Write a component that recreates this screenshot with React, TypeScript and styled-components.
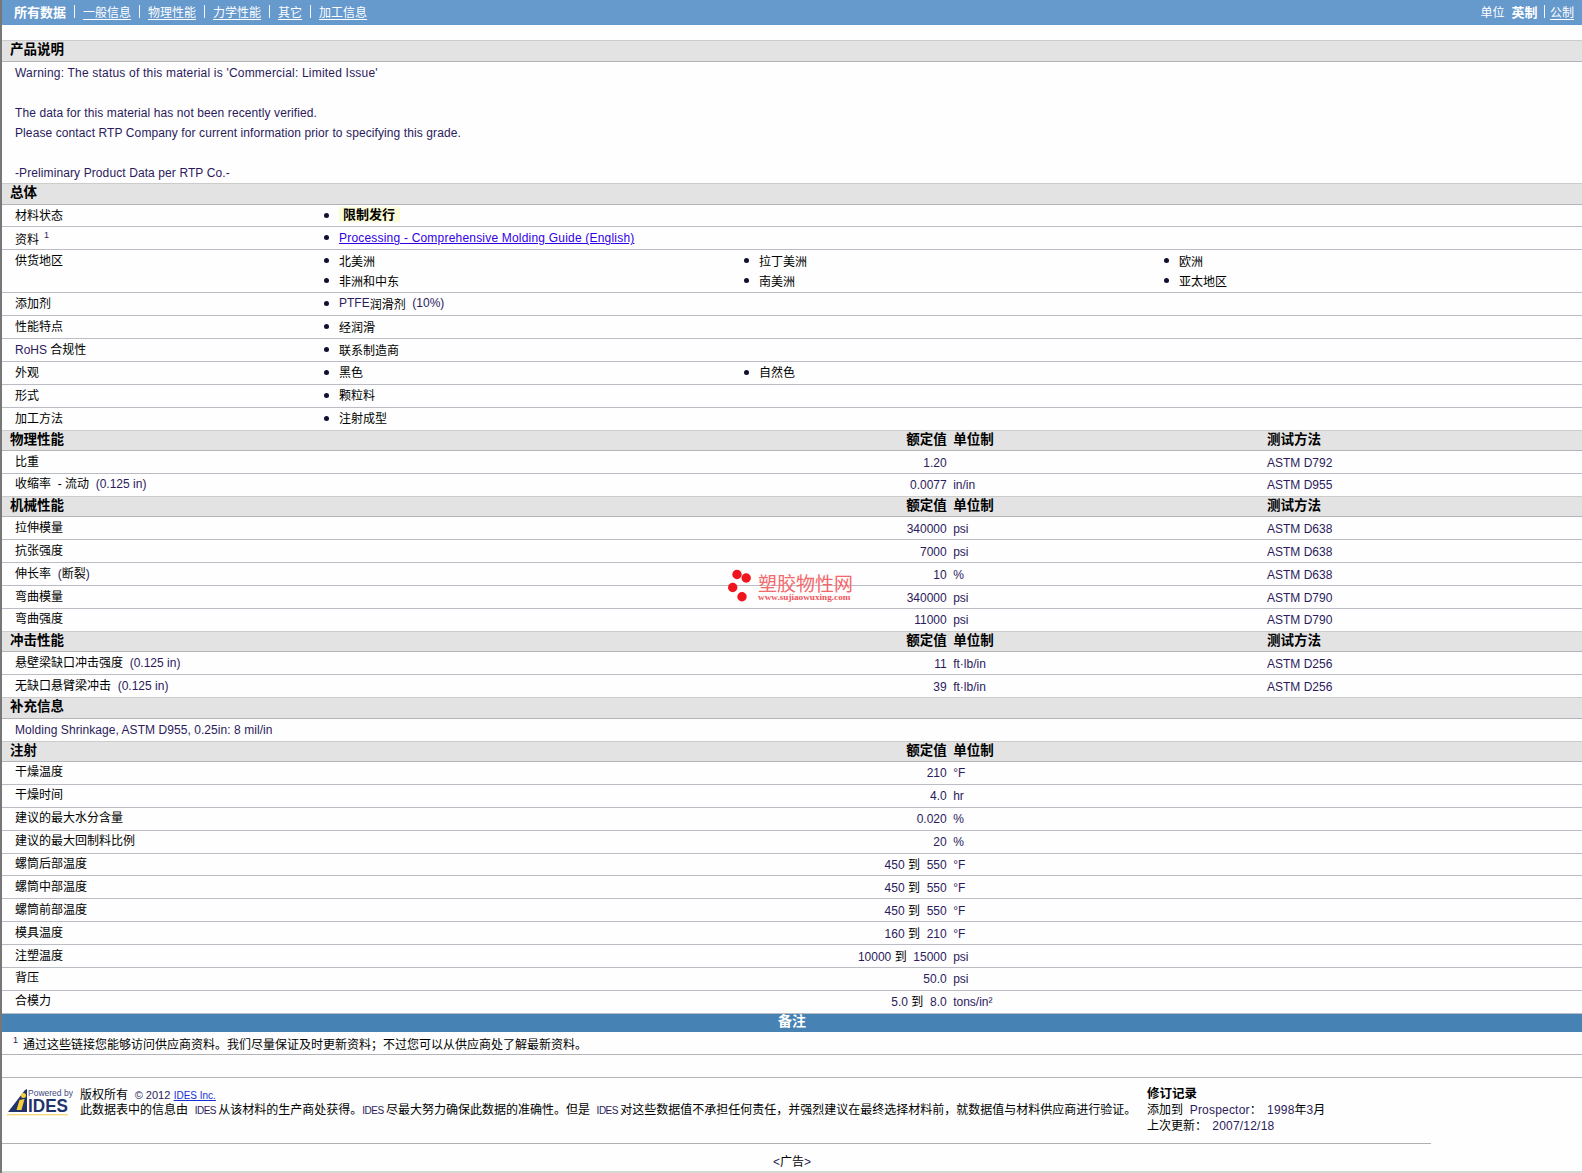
import React from 'react';
import styled, { createGlobalStyle } from 'styled-components';

const GlobalStyle = createGlobalStyle`
  html, body {
    margin: 0;
    padding: 0;
    background: #fdfefd;
  }
  body {
    font-family: "Liberation Sans", "Noto Sans CJK SC", sans-serif;
    font-size: 12px;
    color: #000;
  }
`;

const ROW = '22.9px';
const LINE = '#bcbcc4';
const LATIN = '#2c1a5c';

const App = () => (
  <Page>
    <GlobalStyle />
    <TopBar>
      <Nav>
        <NavCurrent>所有数据</NavCurrent>
        {['一般信息', '物理性能', '力学性能', '其它', '加工信息'].map((t) => (
          <React.Fragment key={t}>
            <NavSep />
            <NavLink>{t}</NavLink>
          </React.Fragment>
        ))}
      </Nav>
      <Units>
        <span>单位</span>
        <NavCurrent>英制</NavCurrent>
        <UnitSep />
        <NavLink>公制</NavLink>
      </Units>
    </TopBar>

    <Section>
      <SectionTitle>产品说明</SectionTitle>
    </Section>
    <Description>
      <p>Warning: The status of this material is 'Commercial: Limited Issue'</p>
      <p>&nbsp;</p>
      <p>The data for this material has not been recently verified.</p>
      <p>Please contact RTP Company for current information prior to specifying this grade.</p>
      <p>&nbsp;</p>
      <p>-Preliminary Product Data per RTP Co.-</p>
    </Description>

    <Section>
      <SectionTitle>总体</SectionTitle>
    </Section>
    {general.map((g, i) => (
      <ListRow key={i} $tall={g.items.length > 3}>
        <ListLabel>{g.label}</ListLabel>
        <ItemGrid>
          {g.items.map((item, j) => (
            <Item key={j}>{item}</Item>
          ))}
        </ItemGrid>
      </ListRow>
    ))}

    {properties.map((s) => (
      <PropSection key={s.title} title={s.title} method={s.method} rows={s.rows} />
    ))}

    <Section>
      <SectionTitle>补充信息</SectionTitle>
    </Section>
    <TextRow>Molding Shrinkage, ASTM D955, 0.25in: 8 mil/in</TextRow>

    <PropSection title="注射" rows={injection} />

    <NotesBar>备注</NotesBar>
    <Footnote>
      <Sup>1</Sup>
      <span>通过这些链接您能够访问供应商资料。我们尽量保证及时更新资料；不过您可以从供应商处了解最新资料。</span>
    </Footnote>
    <EmptyRow />

    <Footer>
      <IdesLogo />
      <Legal>
        <div>
          版权所有&nbsp; <Small>© 2012</Small> <LegalLink>IDES Inc.</LegalLink>
        </div>
        <div>
          此数据表中的信息由&nbsp; <Brand>IDES </Brand>从该材料的生产商处获得。<Brand>IDES </Brand>尽最大努力确保此数据的准确性。但是&nbsp; <Brand>IDES </Brand>对这些数据值不承担任何责任，并强烈建议在最终选择材料前，就数据值与材料供应商进行验证。
        </div>
      </Legal>
      <Revision>
        <RevisionTitle>修订记录</RevisionTitle>
        <div>
          添加到&nbsp; <Wide>Prospector</Wide>：&nbsp;<RevisionDate>1998</RevisionDate>年<En>3</En>月
        </div>
        <div>
          上次更新：&nbsp;<RevisionDate>2007/12/18</RevisionDate>
        </div>
      </Revision>
    </Footer>

    <AdRow>
      <En>&lt;</En>广告<En>&gt;</En>
    </AdRow>
    <BottomEdge />

    <Watermark>
      <svg width="30" height="36" viewBox="0 0 30 36">
        <circle cx="9" cy="5.5" r="4.7" fill="#f0141e" />
        <circle cx="18.2" cy="9" r="4.7" fill="#f0141e" />
        <circle cx="4.7" cy="18.5" r="4.7" fill="#f0141e" />
        <circle cx="14" cy="27.8" r="4.7" fill="#f0141e" />
      </svg>
      <WatermarkText>
        <WatermarkName>塑胶物性网</WatermarkName>
        <WatermarkUrl>www.sujiaowuxing.com</WatermarkUrl>
      </WatermarkText>
    </Watermark>
  </Page>
);

const PropSection = ({ title, method, rows }: { title: string; method?: boolean; rows: Prop[] }) => (
  <>
    <PropHead>
      <SectionTitle>{title}</SectionTitle>
      <HeadValue>额定值</HeadValue>
      <HeadUnit>单位制</HeadUnit>
      {method && <HeadUnit $method>测试方法</HeadUnit>}
    </PropHead>
    {rows.map((r, i) => (
      <PropRow key={i}>
        <PropName>{r[0]}</PropName>
        <PropValue>{r[1]}</PropValue>
        <PropUnit>{r[2]}</PropUnit>
        <PropUnit $method>{r[3]}</PropUnit>
      </PropRow>
    ))}
  </>
);

const IdesLogo = () => (
  <svg width="66" height="28" viewBox="0 0 66 28">
    <path d="M1 24 L18 2 L20 1 L20 24 Z" fill="#22336b" />
    <path d="M12.5 12 L17.5 11 L14.5 22 L9.5 22 Z" fill="#f4cf3a" />
    <circle cx="16.5" cy="7.5" r="2.5" fill="#f4cf3a" />
    <text x="21" y="8" fontFamily="Liberation Sans" fontSize="8.5" fill="#3d4a80">
      Powered by
    </text>
    <text x="21" y="24" fontFamily="Liberation Sans" fontWeight="700" fontSize="17.5" fill="#22336b" textLength="40" lengthAdjust="spacingAndGlyphs">
      IDES
    </text>
    <rect x="0" y="26" width="61" height="1.4" fill="#f6dc7a" />
  </svg>
);

const Page = styled.div`
  position: relative;
  height: 1173px;
  box-sizing: border-box;
  border-left: 2px solid #777;
  overflow: hidden;
`;

const TopBar = styled.div`
  height: 25px;
  box-sizing: border-box;
  margin-bottom: 16px;
  background: #6699cc;
  display: flex;
  justify-content: space-between;
  align-items: center;
  padding: 0 8px 2px 12px;
  color: #fff;
`;

const Nav = styled.div`
  display: flex;
  align-items: center;
  gap: 8px;
`;

const Units = styled(Nav)`
  gap: 7px;
`;

const NavCurrent = styled.span`
  font-weight: 700;
  font-size: 13px;
`;

const NavLink = styled.span`
  text-decoration: underline;
  text-underline-offset: 2px;
`;

const NavSep = styled.span`
  width: 1px;
  height: 13px;
  background: #f2f4fa;
`;

const UnitSep = styled(NavSep)`
  margin: 0 -2.5px 0 0;
`;

const Section = styled.div`
  height: 21.5px;
  margin-top: -1px;
  box-sizing: border-box;
  background: #e3e3e4;
  border-top: 1px solid #cccccc;
  border-bottom: 1px solid #b4b4b8;
  display: flex;
  align-items: center;
  padding: 0 0 1px 8px;
`;

const SectionTitle = styled.span`
  font-weight: 700;
  font-size: 13.5px;
  line-height: 14px;
  white-space: nowrap;
`;

const En = styled.span`
  color: ${LATIN};
`;

const Wide = styled(En)`
  letter-spacing: 0.2px;
`;

const RevisionDate = styled(Wide)`
  padding-left: 2px;
`;

const Small = styled(En)`
  font-size: 11px;
`;

const Brand = styled(En)`
  font-size: 10px;
  letter-spacing: -0.5px;
`;

const Description = styled.div`
  height: 122.5px;
  box-sizing: border-box;
  padding: 1px 0 0 13px;
  color: ${LATIN};
  letter-spacing: 0.1px;
  p {
    margin: 0;
    height: 20px;
    line-height: 20px;
  }
  p:first-child {
    letter-spacing: 0.2px;
  }
`;

const ListRow = styled.div<{ $tall?: boolean }>`
  height: ${(p) => (p.$tall ? '43px' : ROW)};
  box-sizing: border-box;
  border-bottom: 1px solid ${LINE};
  display: grid;
  grid-template-columns: 318px 1fr;
  align-items: start;
`;

const ListLabel = styled.div`
  padding-left: 13px;
  line-height: 22px;
  white-space: nowrap;
`;

const Lowered = styled.span`
  display: inline-block;
  line-height: 26px;
`;

const ItemGrid = styled.ul`
  list-style: none;
  margin: 0;
  padding: 0;
  display: grid;
  grid-template-columns: repeat(3, 420px);
  grid-auto-rows: 20px;
`;

const Item = styled.li`
  display: flex;
  align-items: center;
  height: 20px;
  white-space: pre;
  &::before {
    content: '';
    width: 5px;
    height: 5px;
    margin: 1px 10px 0 4px;
    flex: none;
    border-radius: 50%;
    background: #101030;
  }
`;

const Limited = styled.span`
  padding: 0 5px 0 4px;
  height: 15px;
  line-height: 15px;
  background: #fbfbd6;
  font-weight: 700;
  font-size: 13px;
`;

const LinkText = styled.a`
  color: #3300e6;
  text-decoration: underline;
  letter-spacing: 0.2px;
  margin-top: 2px;
`;

const PropRow = styled.div`
  height: ${ROW};
  box-sizing: border-box;
  border-bottom: 1px solid ${LINE};
  display: grid;
  grid-template-columns: 600px 344.7px 320.3px 1fr;
  align-items: center;
  white-space: pre;
`;

const PropHead = styled(Section)`
  display: grid;
  grid-template-columns: 592px 344.7px 320.3px 1fr;
  align-items: center;
`;

const HeadValue = styled(SectionTitle)`
  text-align: right;
`;

const HeadUnit = styled(SectionTitle)<{ $method?: boolean }>`
  padding-left: ${(p) => (p.$method ? '0' : '6.5px')};
`;

const PropName = styled.div`
  padding: 0 0 1px 13px;
  line-height: 16px;
`;

const PropValue = styled.div`
  padding-top: 1px;
  line-height: 16px;
  text-align: right;
  color: ${LATIN};
`;

const PropUnit = styled.div<{ $method?: boolean }>`
  padding: 1px 0 0 ${(p) => (p.$method ? '0' : '6.5px')};
  line-height: 16px;
  color: ${LATIN};
`;

const TextRow = styled.div`
  height: ${ROW};
  box-sizing: border-box;
  border-bottom: 1px solid ${LINE};
  display: flex;
  align-items: center;
  padding: 1px 0 0 13px;
  color: ${LATIN};
  letter-spacing: 0.06px;
`;

const NotesBar = styled.div`
  height: 18px;
  line-height: 14px;
  background: #4682b4;
  color: #fff;
  font-weight: 700;
  font-size: 14px;
  text-align: center;
`;

const Footnote = styled.div`
  height: 23.3px;
  box-sizing: border-box;
  border-bottom: 1px solid #b4b4b8;
  display: flex;
  padding: 4px 0 0 11px;
  gap: 5px;
  line-height: 19px;
`;

const Sup = styled.sup`
  font-size: 9px;
  line-height: 9px;
  color: ${LATIN};
  margin: 0;
`;

const ListSup = styled(Sup)`
  margin-left: 5px;
  vertical-align: 6px;
`;

const EmptyRow = styled.div`
  height: 23px;
  box-sizing: border-box;
  border-bottom: 1px solid #b4b4b8;
`;

const Footer = styled.div`
  height: 66px;
  width: 1429px;
  box-sizing: border-box;
  border-bottom: 1px solid #b0b0b0;
  display: grid;
  grid-template-columns: 78px 1067px 1fr;
  padding-top: 9px;
  line-height: 15px;
  white-space: nowrap;
  & > svg {
    margin: 1px 0 0 5px;
  }
`;

const Legal = styled.div`
  padding-top: 1px;
`;

const LegalLink = styled.a`
  font-size: 10px;
  color: #1530d8;
  text-decoration: underline;
`;

const Revision = styled.div`
  margin-top: -1px;
  line-height: 16px;
`;

const RevisionTitle = styled.div`
  font-weight: 700;
  font-size: 12.5px;
`;

const AdRow = styled.div`
  height: 27px;
  box-sizing: border-box;
  padding-top: 10px;
  text-align: center;
  line-height: 17px;
`;

const BottomEdge = styled.div`
  height: 2px;
  background: #d8d8d2;
`;

const Watermark = styled.div`
  position: absolute;
  left: 726px;
  top: 569px;
  display: flex;
`;

const WatermarkText = styled.div`
  display: flex;
  flex-direction: column;
  padding-top: 5px;
`;

const WatermarkName = styled.span`
  font-family: "Noto Sans CJK SC", sans-serif;
  font-size: 19px;
  line-height: 18px;
  color: #f4686c;
`;

const WatermarkUrl = styled.span`
  font-family: "Liberation Serif", serif;
  font-weight: 700;
  font-size: 9.2px;
  line-height: 10px;
  color: #f0555c;
  white-space: nowrap;
`;

const general: { label: React.ReactNode; items: React.ReactNode[] }[] = [
  { label: '材料状态', items: [<Limited>限制发行</Limited>] },
  {
    label: (
      <Lowered>
        资料<ListSup>1</ListSup>
      </Lowered>
    ),
    items: [<LinkText>Processing - Comprehensive Molding Guide (English)</LinkText>],
  },
  { label: '供货地区', items: ['北美洲', '拉丁美洲', '欧洲', '非洲和中东', '南美洲', '亚太地区'] },
  {
    label: '添加剂',
    items: [
      <>
        <En>PTFE</En>润滑剂 <En> (10%)</En>
      </>,
    ],
  },
  { label: '性能特点', items: ['经润滑'] },
  {
    label: (
      <>
        <En>RoHS</En> 合规性
      </>
    ),
    items: ['联系制造商'],
  },
  { label: '外观', items: ['黑色', '自然色'] },
  { label: '形式', items: ['颗粒料'] },
  { label: '加工方法', items: ['注射成型'] },
];

const thick = <En> (0.125 in)</En>;

const Black = styled.span`
  color: #000;
`;

const range = (a: string, b: string) => (
  <>
    {a} <Black>到</Black>{'\u00a0 '}{b}
  </>
);

type Prop = [React.ReactNode, React.ReactNode, string?, string?];

const properties: { title: string; method: boolean; rows: Prop[] }[] = [
  {
    title: '物理性能',
    method: true,
    rows: [
      ['比重', '1.20', '', 'ASTM D792'],
      [<>收缩率  - 流动 {thick}</>, '0.0077', 'in/in', 'ASTM D955'],
    ],
  },
  {
    title: '机械性能',
    method: true,
    rows: [
      ['拉伸模量', '340000', 'psi', 'ASTM D638'],
      ['抗张强度', '7000', 'psi', 'ASTM D638'],
      [<>伸长率 <En> (</En>断裂<En>)</En></>, '10', '%', 'ASTM D638'],
      ['弯曲模量', '340000', 'psi', 'ASTM D790'],
      ['弯曲强度', '11000', 'psi', 'ASTM D790'],
    ],
  },
  {
    title: '冲击性能',
    method: true,
    rows: [
      [<>悬壁梁缺口冲击强度 {thick}</>, '11', 'ft·lb/in', 'ASTM D256'],
      [<>无缺口悬臂梁冲击 {thick}</>, '39', 'ft·lb/in', 'ASTM D256'],
    ],
  },
];

const injection: Prop[] = [
  ['干燥温度', '210', '°F'],
  ['干燥时间', '4.0', 'hr'],
  ['建议的最大水分含量', '0.020', '%'],
  ['建议的最大回制料比例', '20', '%'],
  ['螺筒后部温度', range('450', '550'), '°F'],
  ['螺筒中部温度', range('450', '550'), '°F'],
  ['螺筒前部温度', range('450', '550'), '°F'],
  ['模具温度', range('160', '210'), '°F'],
  ['注塑温度', range('10000', '15000'), 'psi'],
  ['背压', '50.0', 'psi'],
  ['合模力', range('5.0', '8.0'), 'tons/in²'],
];

export default App;
